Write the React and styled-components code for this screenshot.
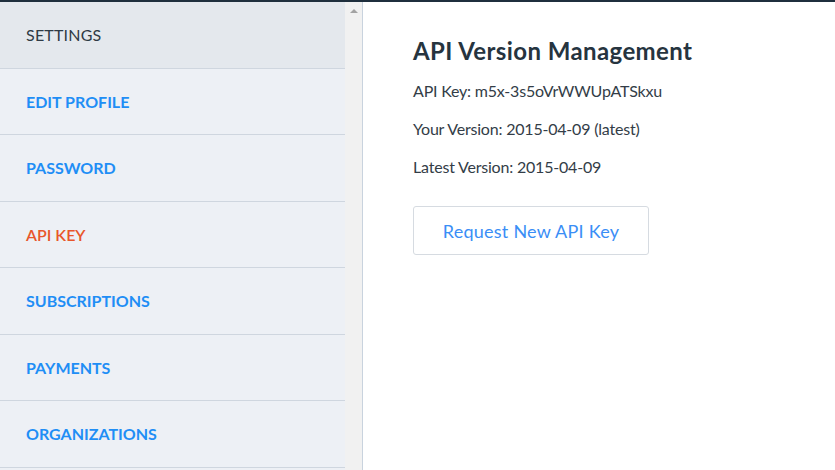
import React from "react";
import styled, { createGlobalStyle } from "styled-components";

const GlobalStyle = createGlobalStyle`
  html, body {
    margin: 0;
    padding: 0;
    background: #fff;
  }
  body {
    font-family: Lato, "Liberation Sans", sans-serif;
    color: #333d47;
  }
`;

const menu = [
  { label: "EDIT PROFILE" },
  { label: "PASSWORD" },
  { label: "API KEY", active: true },
  { label: "SUBSCRIPTIONS" },
  { label: "PAYMENTS" },
  { label: "ORGANIZATIONS" },
];

const App = () => {
  return (
    <Page>
      <GlobalStyle />
      <TopBar />
      <Body>
        <Sidebar>
          <Nav>
            <Header>SETTINGS</Header>
            {menu.map((item) => (
              <NavItem key={item.label} $active={item.active}>
                {item.label}
              </NavItem>
            ))}
          </Nav>
          <ScrollTrack>
            <ArrowUp />
          </ScrollTrack>
        </Sidebar>
        <Main>
          <Title>API Version Management</Title>
          <Line>API Key: m5x-3s5oVrWWUpATSkxu</Line>
          <Line>Your Version: 2015-04-09 (latest)</Line>
          <Line>Latest Version: 2015-04-09</Line>
          <Button>Request New API Key</Button>
        </Main>
      </Body>
    </Page>
  );
};

export default App;

const Page = styled.div`
  width: 835px;
  height: 470px;
  overflow: hidden;
  display: flex;
  flex-direction: column;
`;

const TopBar = styled.div`
  height: 2px;
  background: #1f2f3d;
  flex-shrink: 0;
`;

const Body = styled.div`
  flex: 1;
  display: flex;
  min-height: 0;
`;

const Sidebar = styled.div`
  width: 362px;
  display: flex;
  border-right: 1px solid #c9d3de;
  overflow: hidden;
  flex-shrink: 0;
`;

const Nav = styled.div`
  width: 345px;
  background: #edf0f5;
`;

const Header = styled.div`
  height: 65.5px;
  display: flex;
  align-items: center;
  padding-left: 26px;
  background: #e4e8ed;
  border-bottom: 1px solid #cfd6df;
  font-size: 16px;
  color: #2e3a45;
  letter-spacing: 0.2px;
`;

const NavItem = styled.div`
  height: 65.5px;
  display: flex;
  align-items: center;
  padding-left: 26px;
  border-bottom: 1px solid #cfd6df;
  font-size: 16px;
  font-weight: 700;
  color: ${(p) => (p.$active ? "#e8562b" : "#1f8ef5")};
  ${(p) => p.$active && "font-weight: 600;"}
`;

const ScrollTrack = styled.div`
  width: 17px;
  background: #f1f1f1;
  display: flex;
  justify-content: center;
  padding-top: 7px;
  box-sizing: border-box;
`;

const ArrowUp = styled.div`
  width: 0;
  height: 0;
  border-left: 4px solid transparent;
  border-right: 4px solid transparent;
  border-bottom: 4px solid #a3a3a3;
`;

const Main = styled.div`
  flex: 1;
  padding: 34px 0 0 50px;
`;

const Title = styled.h2`
  margin: 0 0 14px;
  font-size: 24px;
  font-weight: 700;
  color: #26343f;
  line-height: 30px;
  letter-spacing: 0.4px;
`;

const Line = styled.p`
  margin: 0 0 16px;
  font-size: 16px;
  line-height: 22px;
  letter-spacing: -0.2px;
`;

const Button = styled.button`
  margin-top: 12px;
  width: 236px;
  height: 49px;
  background: #fff;
  border: 1px solid #d6dbe1;
  border-radius: 3px;
  font-family: inherit;
  font-size: 18px;
  letter-spacing: 0.25px;
  color: #3a8ef6;
  cursor: pointer;
`;
